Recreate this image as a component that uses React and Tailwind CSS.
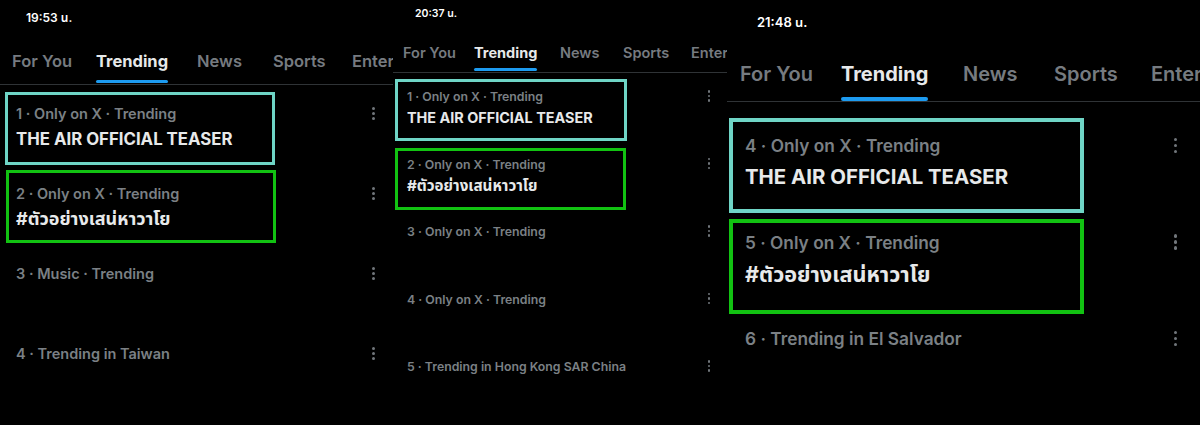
import React from "react";

const FONT = { fontFamily: '"Inter", "Noto Sans", "Noto Sans Thai", "Tahoma", sans-serif' };

const TABS = ["For You", "Trending", "News", "Sports", "Entertainment"];

const panels = [
  {
    wrap: "w-[393px]",
    time: "19:53 น.",
    timeCls: "pt-[10px] pl-[26px] text-[12px] leading-[16px]",
    tabsCls: "mt-[24px] pl-[12px] text-[16.5px] leading-[22px]",
    tabW: ["w-[84px]", "w-[101px]", "w-[76px]", "w-[79px]", "w-[120px]"],
    lineCls: "mt-[8px] h-[3px]",
    dividerCls: "mt-[1px]",
    listCls: "mt-[4px]",
    rowCls: "h-[80px] pl-[16px] pr-[18px]",
    capCls: "pt-[15px] text-[14.5px] leading-[20px]",
    titleCls: "mt-[4px] text-[16.8px] leading-[22px]",
    thaiCls: "mt-[4px] text-[18px] leading-[22px]",
    dotsCls: "mt-[18px] gap-[2px]",
    dot: "w-[3px] h-[3px]",
    boxes: [
      "left-[5px] top-[92px] w-[270px] h-[73px] border-[3px] border-[#6fd5c6]",
      "left-[6px] top-[170px] w-[270px] h-[73px] border-[3px] border-[#12c212]",
    ],
    rows: [
      { c: "1 · Only on X · Trending", t: "THE AIR OFFICIAL TEASER" },
      { c: "2 · Only on X · Trending", t: "#ตัวอย่างเสน่หาวาโย", thai: true },
      { c: "3 · Music · Trending" },
      { c: "4 · Trending in Taiwan" },
    ],
  },
  {
    wrap: "w-[334px]",
    time: "20:37 น.",
    timeCls: "pt-[7px] pl-[22px] text-[10.5px] leading-[14px]",
    tabsCls: "mt-[21.5px] pl-[10px] text-[14.5px] leading-[19px]",
    tabW: ["w-[71px]", "w-[86px]", "w-[63px]", "w-[68px]", "w-[100px]"],
    lineCls: "mt-[6.5px] h-[2.5px]",
    dividerCls: "mt-[1.5px]",
    listCls: "mt-[2.5px]",
    rowCls: "h-[67.5px] pl-[14px] pr-[17px]",
    capCls: "pt-[12.5px] text-[12.3px] leading-[17px]",
    titleCls: "mt-[3px] text-[14.4px] leading-[19px]",
    thaiCls: "mt-[3px] text-[15.2px] leading-[19px]",
    dotsCls: "mt-[14.5px] gap-[2px]",
    dot: "w-[2.5px] h-[2.5px]",
    boxes: [
      "left-[2px] top-[79px] w-[232px] h-[62px] border-[3px] border-[#6fd5c6]",
      "left-[2px] top-[148px] w-[231px] h-[62px] border-[3px] border-[#12c212]",
    ],
    rows: [
      { c: "1 · Only on X · Trending", t: "THE AIR OFFICIAL TEASER" },
      { c: "2 · Only on X · Trending", t: "#ตัวอย่างเสน่หาวาโย", thai: true },
      { c: "3 · Only on X · Trending" },
      { c: "4 · Only on X · Trending" },
      { c: "5 · Trending in Hong Kong SAR China" },
    ],
  },
  {
    wrap: "w-[473px]",
    time: "21:48 น.",
    timeCls: "pt-[13.5px] pl-[30px] text-[13px] leading-[17px]",
    tabsCls: "mt-[30.5px] pl-[13px] text-[20px] leading-[26px]",
    tabW: ["w-[101px]", "w-[122px]", "w-[91px]", "w-[97px]", "w-[140px]"],
    lineCls: "mt-[10px] h-[4px]",
    dividerCls: "mt-0",
    listCls: "mt-[13px]",
    rowCls: "h-[96.5px] pl-[18px] pr-[23px]",
    capCls: "pt-[19px] text-[17.3px] leading-[24px]",
    titleCls: "mt-[5px] text-[20.4px] leading-[28px]",
    thaiCls: "mt-[5px] text-[21.6px] leading-[28px]",
    dotsCls: "mt-[22.5px] gap-[2.5px]",
    dot: "w-[3.5px] h-[3.5px]",
    boxes: [
      "left-[2px] top-[118px] w-[355px] h-[95px] border-[4px] border-[#6fd5c6]",
      "left-[2px] top-[219px] w-[355px] h-[95px] border-[4px] border-[#12c212]",
    ],
    rows: [
      { c: "4 · Only on X · Trending", t: "THE AIR OFFICIAL TEASER" },
      { c: "5 · Only on X · Trending", t: "#ตัวอย่างเสน่หาวาโย", thai: true },
      { c: "6 · Trending in El Salvador" },
    ],
  },
];

function Dots({ p }) {
  return (
    <div className={`flex flex-col items-center ${p.dotsCls}`}>
      <span className={`${p.dot} rounded-full bg-[#71767b]`} />
      <span className={`${p.dot} rounded-full bg-[#71767b]`} />
      <span className={`${p.dot} rounded-full bg-[#71767b]`} />
    </div>
  );
}

function Panel({ p }) {
  return (
    <div className={`${p.wrap} relative h-[425px] shrink-0 overflow-hidden bg-black`}>
      {/* status bar */}
      <div className={`${p.timeCls} font-semibold text-white`}>{p.time}</div>

      {/* tabs */}
      <div className={`${p.tabsCls} flex items-start whitespace-nowrap font-semibold`}>
        {TABS.map((tab, i) => (
          <div key={tab} className={`${p.tabW[i]} shrink-0`}>
            {i === 1 ? (
              <div className="inline-flex flex-col">
                <span className="text-[#e7e9ea] font-bold">{tab}</span>
                <span className={`${p.lineCls} w-full rounded-full bg-[#1d9bf0]`} />
              </div>
            ) : (
              <span className="text-[#767b80]">{tab}</span>
            )}
          </div>
        ))}
      </div>
      <div className={`${p.dividerCls} h-px bg-[#2f3336]`} />

      {/* trend rows */}
      <div className={p.listCls}>
        {p.rows.map((r) => (
          <div key={r.c} className={`${p.rowCls} flex items-start justify-between`}>
            <div>
              <div className={`${p.capCls} font-semibold text-[#7b8085]`}>{r.c}</div>
              {r.t && (
                <div className={`${r.thai ? p.thaiCls : p.titleCls} font-bold text-[#e7e9ea]`}>
                  {r.t}
                </div>
              )}
            </div>
            <Dots p={p} />
          </div>
        ))}
      </div>

      {/* highlight annotations */}
      {p.boxes.map((b) => (
        <div key={b} className={`absolute ${b} pointer-events-none`} />
      ))}
    </div>
  );
}

export default function App() {
  return (
    <div className="flex w-[1200px] h-[425px] bg-black overflow-hidden" style={FONT}>
      {panels.map((p) => (
        <Panel key={p.time} p={p} />
      ))}
    </div>
  );
}
